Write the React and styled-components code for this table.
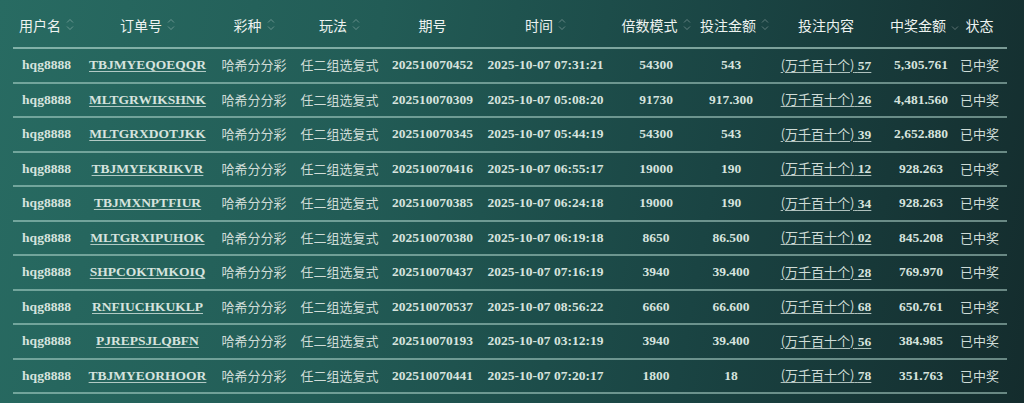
import React from "react";
import styled, { createGlobalStyle } from "styled-components";

const GlobalStyle = createGlobalStyle`
    html, body {
        margin: 0;
        padding: 0;
        height: 100%;
    }
    body {
        background: linear-gradient(100deg, #286b62 0%, #225c56 35%, #1a4443 68%, #142c2d 100%);
        font-family: "Liberation Serif", "Noto Sans CJK SC", serif;
        overflow: hidden;
    }
`;

const Page = styled.div`
    width: 1024px;
    height: 403px;
    padding: 0 17px 0 13px;
    box-sizing: border-box;
`;

const Table = styled.table`
    width: 994px;
    border-collapse: collapse;
    table-layout: fixed;
`;

const HeadCell = styled.th`
    height: 47px;
    padding: 0;
    border-bottom: 2px solid rgba(190, 225, 215, 0.6);
    font-family: "Noto Sans CJK SC", sans-serif;
    font-size: 14px;
    line-height: 18px;
    font-weight: 400;
    color: #eef3f1;
    text-align: center;
    white-space: nowrap;
`;

const HeadInner = styled.span`
    display: inline-flex;
    align-items: center;
    gap: 5px;
    padding-top: 2px;
`;

const Row = styled.tr`
    & > td {
        border-bottom: 2px solid rgba(190, 225, 215, 0.5);
    }
`;

const Cell = styled.td`
    height: 32.5px;
    padding: 0;
    line-height: 18px;
    text-align: center;
    white-space: nowrap;
    color: ${(p) => (p.$cjk ? "#cfdcd7" : "#d6e3de")};
    font-size: ${(p) => (p.$cjk ? "13px" : "13.5px")};
    font-family: ${(p) => (p.$cjk ? '"Noto Sans CJK SC", sans-serif' : '"Liberation Serif", "Noto Sans CJK SC", serif')};
    font-weight: ${(p) => (p.$cjk ? 400 : 700)};
`;

const OrderLink = styled.a`
    color: #d6e3de;
    text-decoration: underline;
    text-decoration-thickness: 1px;
    text-decoration-color: rgba(214, 227, 222, 0.8);
    text-underline-offset: 2px;
    cursor: pointer;
`;

const BetLink = styled.a`
    color: #d6e3de;
    text-decoration: underline;
    text-decoration-thickness: 1px;
    text-decoration-color: rgba(214, 227, 222, 0.8);
    text-underline-offset: 2px;
    cursor: pointer;

    span {
        font-family: "Noto Sans CJK SC", sans-serif;
        font-size: 13px;
        font-weight: 400;
        color: #cfdcd7;
    }
    b {
        font-family: "Liberation Serif", serif;
        font-weight: 700;
    }
`;

function SortIcon({ mode }) {
    return (
        <svg width="8" height="13" viewBox="0 0 8 13" fill="none" stroke="rgba(255,255,255,0.3)" strokeWidth="1">
            {mode === "both" && <path d="M1 4.5 L4 1.5 L7 4.5" />}
            <path d="M1 8.5 L4 11.5 L7 8.5" />
        </svg>
    );
}

const columns = [
    { key: "user", title: "用户名", width: 67, sort: "both" },
    { key: "order", title: "订单号", width: 135, sort: "both" },
    { key: "lottery", title: "彩种", width: 78, sort: "both" },
    { key: "play", title: "玩法", width: 93, sort: "both" },
    { key: "issue", title: "期号", width: 93 },
    { key: "time", title: "时间", width: 133, sort: "both" },
    { key: "multi", title: "倍数模式", width: 88, sort: "both" },
    { key: "amount", title: "投注金额", width: 62, sort: "both" },
    { key: "content", title: "投注内容", width: 128 },
    { key: "win", title: "中奖金额", width: 62, sort: "down" },
    { key: "status", title: "状态", width: 55 },
];

const rows = [
    ["TBJMYEQOEQQR", "202510070452", "2025-10-07 07:31:21", "54300", "543", "57", "5,305.761"],
    ["MLTGRWIKSHNK", "202510070309", "2025-10-07 05:08:20", "91730", "917.300", "26", "4,481.560"],
    ["MLTGRXDOTJKK", "202510070345", "2025-10-07 05:44:19", "54300", "543", "39", "2,652.880"],
    ["TBJMYEKRIKVR", "202510070416", "2025-10-07 06:55:17", "19000", "190", "12", "928.263"],
    ["TBJMXNPTFIUR", "202510070385", "2025-10-07 06:24:18", "19000", "190", "34", "928.263"],
    ["MLTGRXIPUHOK", "202510070380", "2025-10-07 06:19:18", "8650", "86.500", "02", "845.208"],
    ["SHPCOKTMKOIQ", "202510070437", "2025-10-07 07:16:19", "3940", "39.400", "28", "769.970"],
    ["RNFIUCHKUKLP", "202510070537", "2025-10-07 08:56:22", "6660", "66.600", "68", "650.761"],
    ["PJREPSJLQBFN", "202510070193", "2025-10-07 03:12:19", "3940", "39.400", "56", "384.985"],
    ["TBJMYEORHOOR", "202510070441", "2025-10-07 07:20:17", "1800", "18", "78", "351.763"],
];

export default function App() {
    return (
        <Page>
            <GlobalStyle />
            <Table>
                <colgroup>
                    {columns.map((c) => (
                        <col key={c.key} style={{ width: c.width }} />
                    ))}
                </colgroup>
                <thead>
                    <tr>
                        {columns.map((c) => (
                            <HeadCell key={c.key}>
                                <HeadInner>
                                    {c.title}
                                    {c.sort && <SortIcon mode={c.sort} />}
                                </HeadInner>
                            </HeadCell>
                        ))}
                    </tr>
                </thead>
                <tbody>
                    {rows.map(([order, issue, time, multi, amount, num, win]) => (
                        <Row key={order}>
                            <Cell>hqg8888</Cell>
                            <Cell>
                                <OrderLink>{order}</OrderLink>
                            </Cell>
                            <Cell $cjk>哈希分分彩</Cell>
                            <Cell $cjk>任二组选复式</Cell>
                            <Cell>{issue}</Cell>
                            <Cell>{time}</Cell>
                            <Cell>{multi}</Cell>
                            <Cell>{amount}</Cell>
                            <Cell>
                                <BetLink>
                                    <span>(万千百十个)</span> <b>{num}</b>
                                </BetLink>
                            </Cell>
                            <Cell>{win}</Cell>
                            <Cell $cjk>已中奖</Cell>
                        </Row>
                    ))}
                </tbody>
            </Table>
        </Page>
    );
}
